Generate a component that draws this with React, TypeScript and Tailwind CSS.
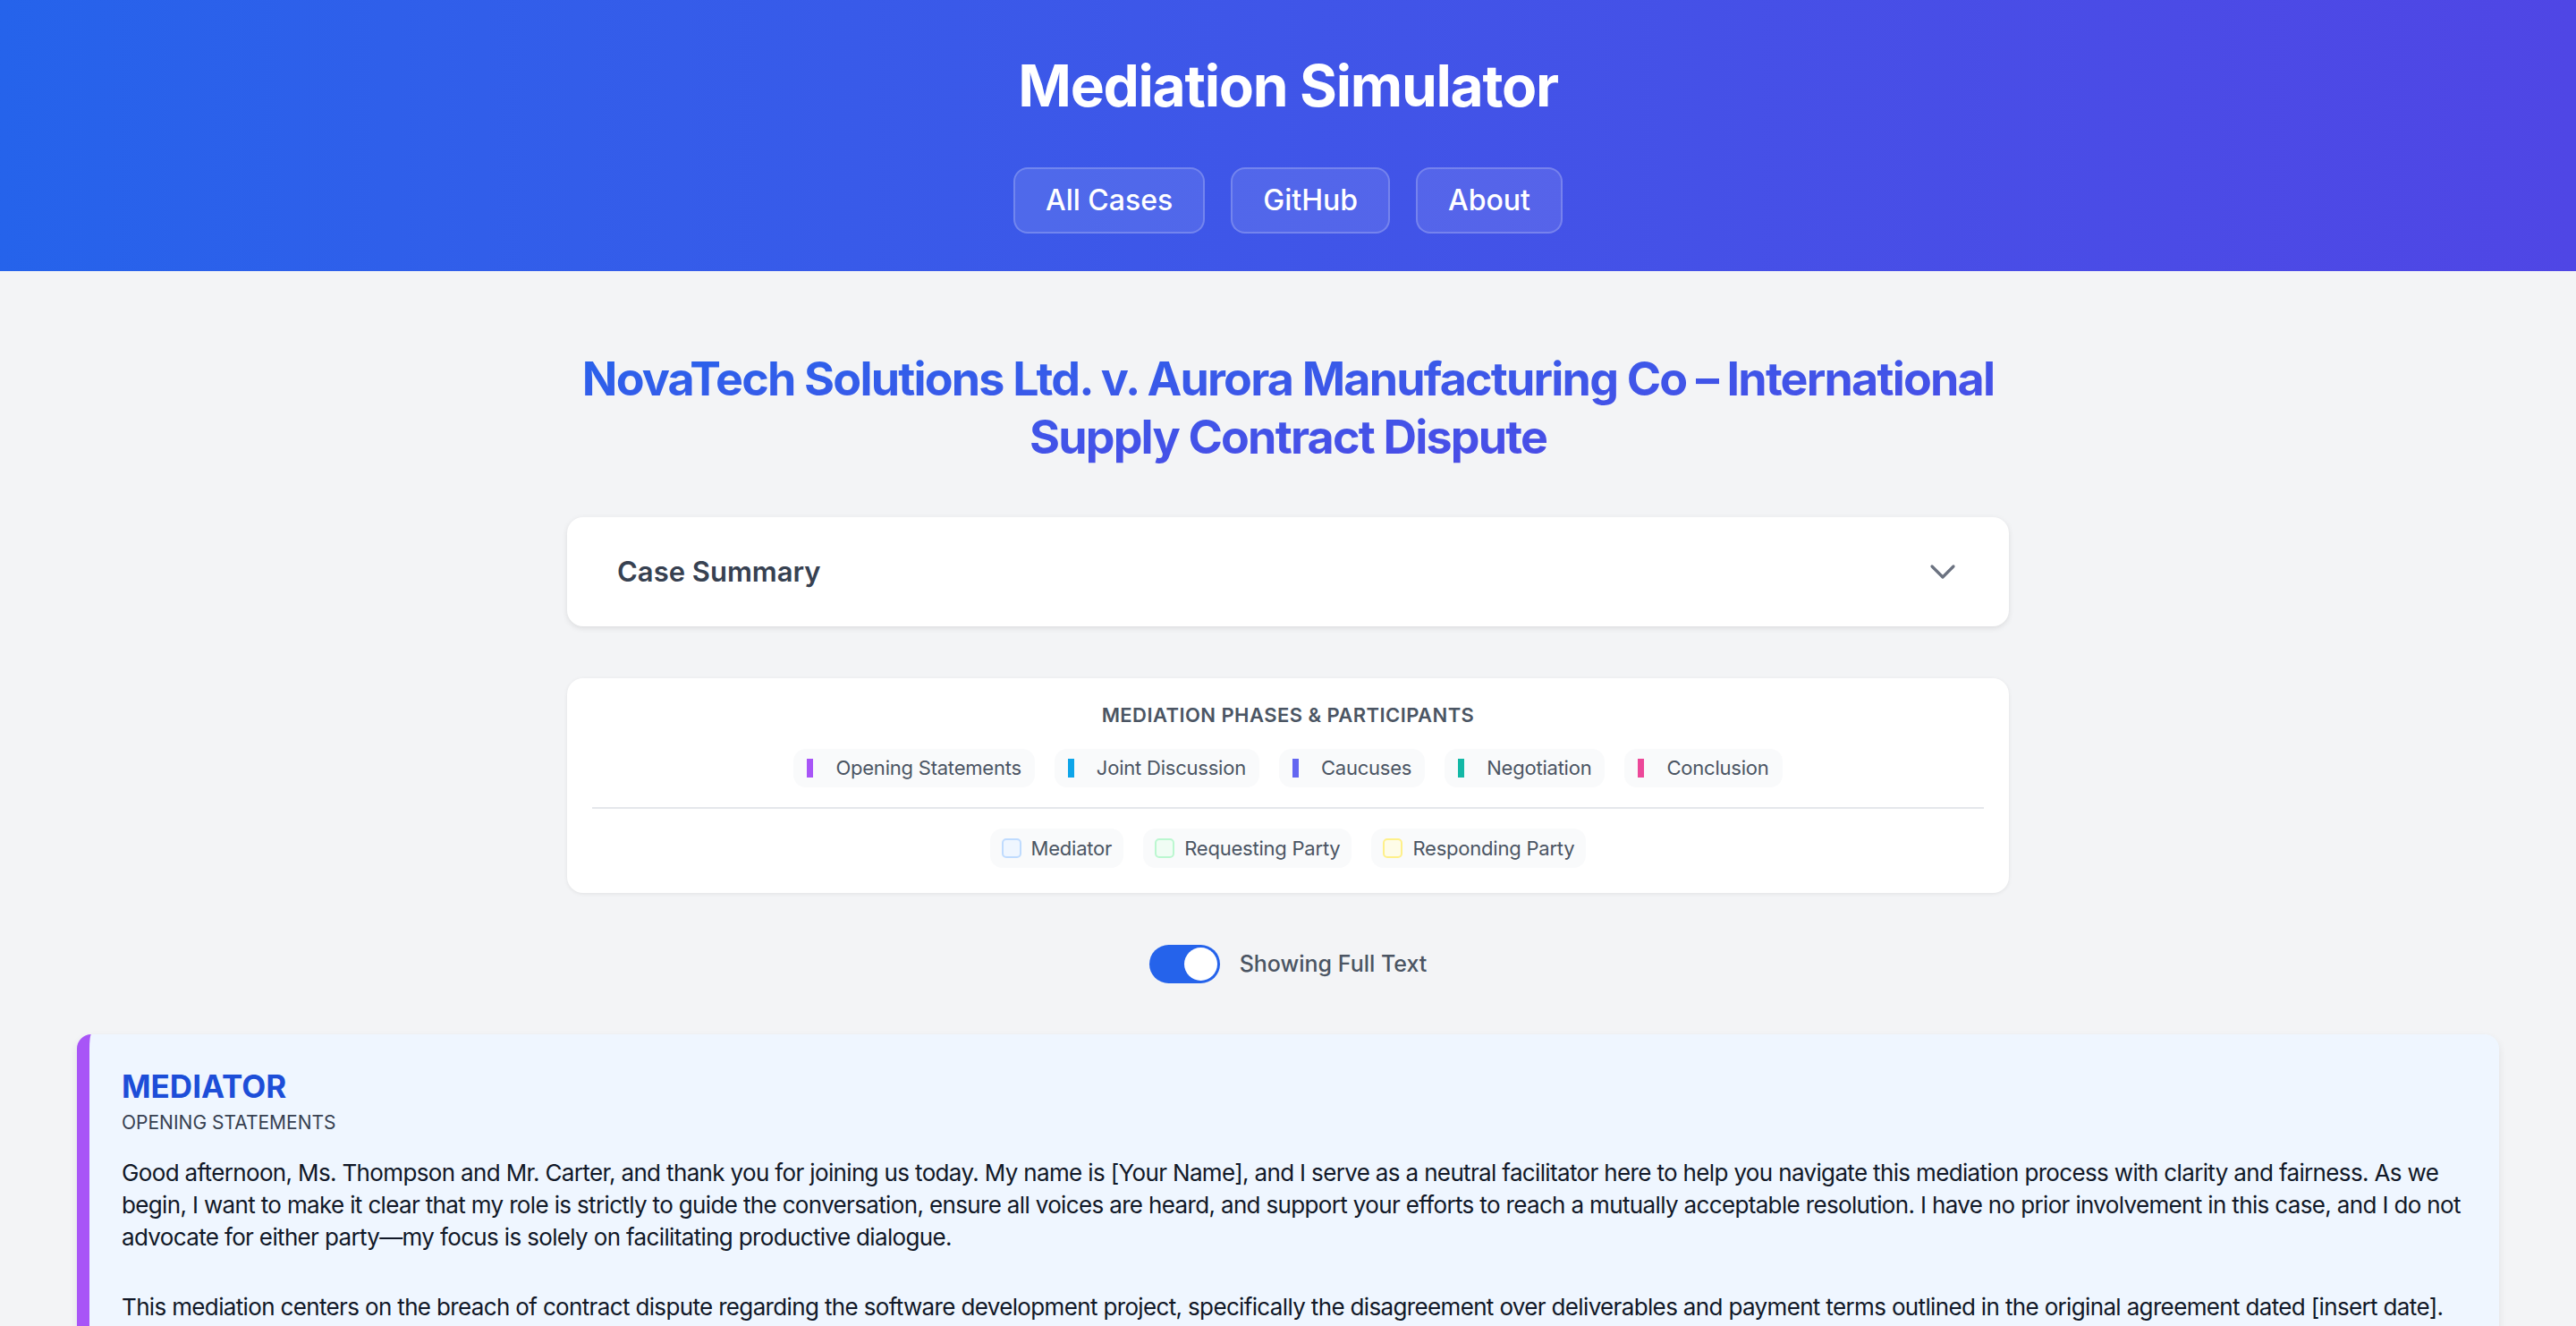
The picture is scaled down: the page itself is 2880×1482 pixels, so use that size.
import React, { useState } from 'react';
import { ChevronDown } from 'lucide-react';

const phases = [
  { name: 'Opening Statements', bar: 'bg-[#a855f7]' },
  { name: 'Joint Discussion', bar: 'bg-[#0ea5e9]' },
  { name: 'Caucuses', bar: 'bg-[#6366f1]' },
  { name: 'Negotiation', bar: 'bg-[#14b8a6]' },
  { name: 'Conclusion', bar: 'bg-[#ec4899]' },
];

const participants = [
  { name: 'Mediator', swatch: 'bg-[#eff6ff] border-[#bfdbfe]' },
  { name: 'Requesting Party', swatch: 'bg-[#f0fdf4] border-[#bbf7d0]' },
  { name: 'Responding Party', swatch: 'bg-[#fefce8] border-[#fef08a]' },
];

const paragraphs = [
  'Good afternoon, Ms. Thompson and Mr. Carter, and thank you for joining us today. My name is [Your Name], and I serve as a neutral facilitator here to help you navigate this mediation process with clarity and fairness. As we begin, I want to make it clear that my role is strictly to guide the conversation, ensure all voices are heard, and support your efforts to reach a mutually acceptable resolution. I have no prior involvement in this case, and I do not advocate for either party\u2014my focus is solely on facilitating productive dialogue.',
  'This mediation centers on the breach of contract dispute regarding the software development project, specifically the disagreement over deliverables and payment terms outlined in the original agreement dated [insert date]. Both parties have expressed a willingness to engage in this process in good faith, and I appreciate that commitment from each of you. Today we will work through the key issues step by step so that everyone has a full opportunity to be heard.',
];

export default function App() {
  const [fullText, setFullText] = useState(true);
  const [open, setOpen] = useState(false);

  return (
    <div className="min-h-screen bg-[#f3f4f6] font-['Inter','Noto_Sans',sans-serif]">
      {/* Header */}
      <header className="bg-linear-to-r from-[#2563eb] to-[#4f46e5] pt-[57px] pb-[42px] flex flex-col items-center">
        <h1 className="text-[64px] leading-[77px] font-bold text-white tracking-[-0.02em]">Mediation Simulator</h1>
        <nav className="mt-[53px] flex gap-[29px]">
          {['All Cases', 'GitHub', 'About'].map((label) => (
            <button
              key={label}
              className="h-[74px] px-[34px] rounded-[16px] border-2 border-white/20 bg-white/10 text-[32px] font-medium text-white"
            >
              {label}
            </button>
          ))}
        </nav>
      </header>

      <main className="flex flex-col items-center pt-[88px] pb-[80px]">
        <div className="w-[1612px] flex flex-col">
          <h2 className="text-center text-[52px] leading-[65px] font-bold tracking-[-0.035em] bg-linear-to-br from-[#2563eb] to-[#4f46e5] bg-clip-text text-transparent">
            NovaTech Solutions Ltd. v. Aurora Manufacturing Co – International Supply Contract Dispute
          </h2>

          {/* Case summary */}
          <button
            onClick={() => setOpen(!open)}
            className="mt-[57px] h-[122px] w-full flex items-center justify-between pl-[56px] pr-[50px] bg-white rounded-[18px] shadow-[0_2px_6px_rgba(0,0,0,0.1)]"
          >
            <span className="text-[31px] font-semibold text-[#374151]">Case Summary</span>
            <ChevronDown className="w-[48px] h-[48px] text-[#6b7280]" strokeWidth={1.6} />
          </button>

          {/* Legend */}
          <div className="mt-[58px] bg-white rounded-[18px] shadow-[0_1px_4px_rgba(0,0,0,0.08)] p-[28px] flex flex-col items-center">
            <h3 className="text-[22px] leading-[26px] font-semibold uppercase tracking-[0.02em] text-[#4b5563]">
              Mediation Phases &amp; Participants
            </h3>
            <div className="mt-[25px] flex flex-wrap justify-center gap-[22px]">
              {phases.map((p) => (
                <div key={p.name} className="flex items-center h-[43px] pl-[15px] pr-[15px] rounded-[14px] bg-[#f9fafb]">
                  <span className={`w-[7px] h-[21px] ${p.bar}`} />
                  <span className="ml-[25px] text-[22px] tracking-[-0.01em] text-[#4b5563]">{p.name}</span>
                </div>
              ))}
            </div>
            <div className="mt-[22px] w-full h-[2px] bg-[#e5e7eb]" />
            <div className="mt-[22px] flex flex-wrap justify-center gap-[22px]">
              {participants.map((p) => (
                <div key={p.name} className="flex items-center h-[44px] pl-[13px] pr-[13px] rounded-[14px] bg-[#f9fafb]">
                  <span className={`w-[22px] h-[22px] rounded-[5px] border-2 ${p.swatch}`} />
                  <span className="ml-[11px] text-[22px] tracking-[-0.01em] text-[#4b5563]">{p.name}</span>
                </div>
              ))}
            </div>
          </div>
        </div>

        {/* Toggle */}
        <div className="mt-[58px] flex items-center gap-[22px]">
          <button
            onClick={() => setFullText(!fullText)}
            className={`w-[79px] h-[43px] rounded-full p-[3px] flex ${fullText ? 'justify-end bg-[#2563eb]' : 'justify-start bg-[#d1d5db]'}`}
          >
            <span className="w-[37px] h-[37px] rounded-full bg-white" />
          </button>
          <span className="text-[25px] font-medium text-[#4b5563]">
            {fullText ? 'Showing Full Text' : 'Showing Summary'}
          </span>
        </div>

        {/* Transcript */}
        <div className="mt-[57px] w-full px-[86px] flex flex-col gap-[40px]">
          <div className="bg-[#eff6ff] rounded-[16px] border-l-[14px] border-[#a855f7] shadow-[0_4px_10px_rgba(0,0,0,0.08)] pl-[36px] pr-[24px] pt-[37px] pb-[40px]">
            <div className="text-[35px] leading-[43px] font-bold text-[#1d4ed8]">MEDIATOR</div>
            <div className="mt-[6px] text-[21px] leading-[26px] uppercase text-[#374151]">Opening Statements</div>
            <div className="mt-[25px] text-[26px] leading-[36px] tracking-[-0.025em] text-[#111827] flex flex-col gap-[42px]">
              {paragraphs.map((t, i) => (
                <p key={i}>{t}</p>
              ))}
            </div>
          </div>
        </div>
      </main>
    </div>
  );
}
